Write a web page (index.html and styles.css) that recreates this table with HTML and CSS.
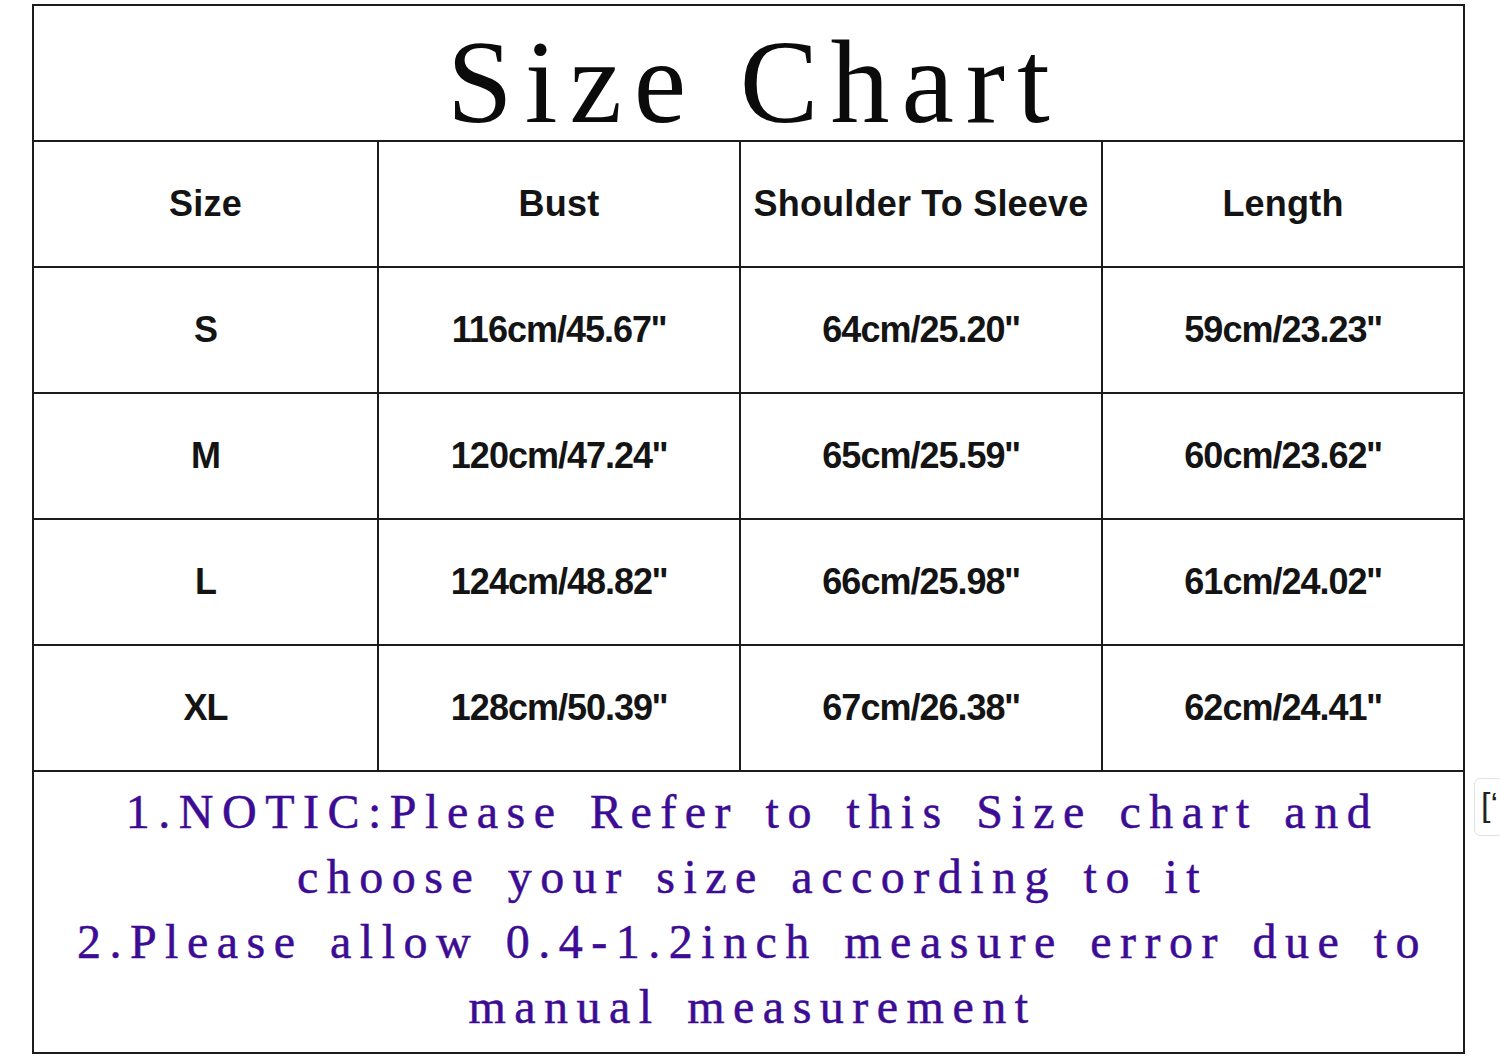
FILE: index.html
```html
<!DOCTYPE html>
<html lang="en">
<head>
<meta charset="utf-8">
<title>Size Chart</title>
<link rel="stylesheet" href="styles.css">
</head>
<body>
<div class="page">
  <div class="chart">
    <div class="title">Size Chart</div>

    <div class="cell head">Size</div>
    <div class="cell head">Bust</div>
    <div class="cell head">Shoulder To Sleeve</div>
    <div class="cell head">Length</div>

    <div class="cell">S</div>
    <div class="cell">116cm/45.67''</div>
    <div class="cell">64cm/25.20''</div>
    <div class="cell">59cm/23.23''</div>

    <div class="cell">M</div>
    <div class="cell">120cm/47.24''</div>
    <div class="cell">65cm/25.59''</div>
    <div class="cell">60cm/23.62''</div>

    <div class="cell">L</div>
    <div class="cell">124cm/48.82''</div>
    <div class="cell">66cm/25.98''</div>
    <div class="cell">61cm/24.02''</div>

    <div class="cell">XL</div>
    <div class="cell">128cm/50.39''</div>
    <div class="cell">67cm/26.38''</div>
    <div class="cell">62cm/24.41''</div>

    <div class="note">
      <p>1.NOTIC:Please Refer to this Size chart and</p>
      <p>choose your size according to it</p>
      <p>2.Please allow 0.4-1.2inch measure error due to</p>
      <p>manual measurement</p>
    </div>
  </div>
  <div class="side-tab">[&#8216;</div>
</div>
</body>
</html>
```

FILE: styles.css
```css
html, body {
  margin: 0;
  padding: 0;
  background: #ffffff;
}

.page {
  position: relative;
  width: 1500px;
  height: 1060px;
  padding: 4px 0 0 32px;
  box-sizing: border-box;
}

.chart {
  display: grid;
  width: 1433px;
  grid-template-columns: 343px 360px 360px 360px;
  grid-template-rows: 134px 124px 124px 124px 124px 124px 280px;
  gap: 2px;
  padding: 2px;
  background: #1c1c1c;
  box-sizing: border-box;
}

.title {
  grid-column: 1 / -1;
  background: #ffffff;
  font-family: "Liberation Serif", "Times New Roman", serif;
  font-size: 118px;
  line-height: 120px;
  letter-spacing: 12px;
  padding: 17px 0 0 12px;
  text-align: center;
  color: #0b0b0b;
  box-sizing: border-box;
}

.cell {
  background: #ffffff;
  display: flex;
  align-items: center;
  justify-content: center;
  font-family: "Liberation Sans", Arial, sans-serif;
  font-weight: bold;
  font-size: 36px;
  letter-spacing: -1px;
  color: #141414;
  white-space: nowrap;
}

.cell.head {
  letter-spacing: 0.2px;
}

.note {
  grid-column: 1 / -1;
  background: #ffffff;
  padding-top: 7px;
  box-sizing: border-box;
  text-align: center;
  font-family: "Liberation Serif", "Times New Roman", serif;
  font-size: 48px;
  line-height: 65px;
  letter-spacing: 8.5px;
  word-spacing: 6px;
  color: #3d0c94;
  -webkit-text-stroke: 0.5px #3d0c94;
}

.note p {
  margin: 0;
  padding-left: 8px;
  white-space: nowrap;
}

.side-tab {
  position: absolute;
  left: 1474px;
  top: 778px;
  width: 30px;
  height: 58px;
  border: 1px solid #e2e2e2;
  border-radius: 6px;
  box-sizing: border-box;
  padding: 8px 0 0 6px;
  font-family: "Liberation Sans", Arial, sans-serif;
  font-size: 34px;
  line-height: 34px;
  color: #222;
  overflow: hidden;
}
```
